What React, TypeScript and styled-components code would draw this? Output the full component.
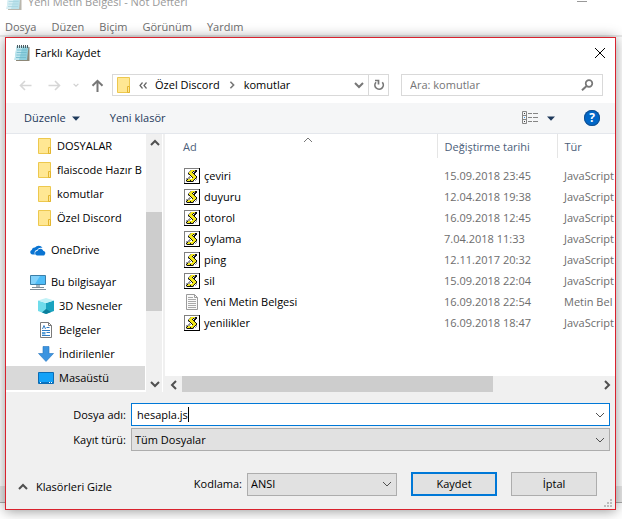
import React, { useState } from "react";
import styled, { createGlobalStyle, css } from "styled-components";

const GlobalStyle = createGlobalStyle`
  *, *::before, *::after { box-sizing: border-box; }
  body {
    margin: 0;
    background: #fff;
    color: #000;
    font: 11px/16px "Open Sans", "Noto Sans", sans-serif;
  }
  button, input, select { font: inherit; color: inherit; margin: 0; }
`;

const Desktop = styled.div`
  display: grid;
  min-height: 100vh;
  overflow: hidden;
`;

/* Notepad window in the background */

const Notepad = styled.div`
  grid-area: 1 / 1;
  min-width: 0;
  display: flex;
  flex-direction: column;
`;

const NotepadTitle = styled.div`
  height: 10px;
  padding: 0 35px 0 6px;
  display: flex;
  align-items: flex-end;
  gap: 6px;
  overflow: hidden;
  color: #999;
  white-space: nowrap;
  svg { flex: none; }
`;

const Minimise = styled.button`
  margin-left: auto;
  width: 10px;
  height: 9px;
  padding: 0;
  border: 0;
  border-top: 1px solid #999;
  background: none;
`;

const MenuBar = styled.nav`
  height: 27px;
  padding: 9px 0 0 5px;
  display: flex;
  align-items: flex-start;
  gap: 15px;
  border-bottom: 2px solid #e9e9e9;
`;

const MenuItem = styled.button`
  padding: 0;
  border: 0;
  background: none;
  color: #6d6d6d;
`;

const EditorArea = styled.div`
  flex: 1;
`;

const NotepadScroll = styled.div`
  height: 17px;
  margin-bottom: 16px;
  background: #e9e9e9;
  border-bottom: 1px solid #aaa;
`;

/* Save dialog */

const Dialog = styled.form`
  grid-area: 1 / 1;
  z-index: 1;
  min-width: 0;
  margin: 37px 6px 9px 5px;
  display: flex;
  flex-direction: column;
  border: 1px solid #d9232e;
  background: #fff;
  box-shadow: 0 1px 12px rgba(0, 0, 0, 0.42);
`;

const TitleBar = styled.header`
  height: 29px;
  padding: 0 10px 0 8px;
  display: flex;
  align-items: center;
  gap: 5px;
  h1 { margin: 0; font: inherit; }
`;

const IconButton = styled.button`
  flex: none;
  display: flex;
  align-items: center;
  justify-content: center;
  padding: 0;
  border: 0;
  background: none;
`;

const CloseButton = styled(IconButton)`
  margin-left: auto;
`;

const NavRow = styled.div`
  display: flex;
  align-items: center;
  padding: 7px 12px 7px 13px;
`;

const NavButtons = styled.div`
  flex: none;
  display: flex;
  align-items: center;
  gap: 12px;
  width: 93px;
`;

const ForwardButton = styled(IconButton)`
  margin-left: 4px;
`;

const AddressBar = styled.div`
  flex: 277 1 277px;
  min-width: 0;
  height: 22px;
  display: flex;
  align-items: center;
  border: 1px solid #d9d9d9;
  padding-left: 4px;
  white-space: nowrap;
`;

const Crumbs = styled.div`
  flex: 1;
  display: flex;
  align-items: center;
  gap: 8px;
  a { color: inherit; text-decoration: none; }
`;

const RefreshButton = styled(IconButton)`
  width: 20px;
  align-self: stretch;
  margin-left: 4px;
  border-left: 1px solid #d9d9d9;
`;

const SearchBox = styled.label`
  flex: 202 1 202px;
  min-width: 0;
  height: 22px;
  margin-left: 12px;
  padding: 0 8px;
  display: flex;
  align-items: center;
  border: 1px solid #d9d9d9;
  input {
    flex: 1;
    min-width: 0;
    padding: 0;
    border: 0;
    outline: 0;
    background: none;
  }
  input::placeholder { color: #757575; opacity: 1; }
`;

const Toolbar = styled.div`
  height: 31px;
  padding: 0 15px 0 18px;
  display: flex;
  align-items: center;
  background: #f5f6f7;
  border-bottom: 1px solid #e4e7ec;
  color: #1e395b;
`;

const ToolButton = styled(IconButton)`
  gap: 6px;
  margin-right: 30px;
`;

const ViewTools = styled.div`
  margin-left: auto;
  display: flex;
  align-items: center;
  gap: 9px;
`;

const HelpButton = styled(IconButton)`
  margin-left: 20px;
  width: 16px;
  height: 16px;
  border-radius: 50%;
  background: #0067c8;
  box-shadow: 0 0 0 1px #14508f inset;
  color: #fff;
  font-size: 12px;
  font-weight: 700;
`;

const Body = styled.div`
  flex: 1;
  min-height: 256px;
  display: flex;
`;

const Sidebar = styled.nav`
  width: 140px;
  flex: none;
  overflow: hidden;
`;

const TreeList = styled.ul`
  margin: 0;
  padding: 0;
  list-style: none;
  & + & { margin-top: 8px; }
`;

const TreeItem = styled.a<{ $depth: number; $selected?: boolean }>`
  height: 24px;
  padding-left: ${(p) => (p.$depth === 0 ? 24 : 32)}px;
  display: flex;
  align-items: center;
  gap: 5px;
  color: inherit;
  text-decoration: none;
  white-space: nowrap;
  width: 139px;
  overflow: hidden;
  background: ${(p) => (p.$selected ? "#d9d9d9" : "none")};
  svg { flex: none; }
`;

const scrollTrack = css`
  display: flex;
  background: #f0f0f0;
`;

const VerticalScroll = styled.div`
  ${scrollTrack}
  flex-direction: column;
  width: 16px;
  flex: none;
`;

const HorizontalScroll = styled.div`
  ${scrollTrack}
  height: 16px;
`;

const ScrollButton = styled(IconButton)`
  width: 17px;
  height: 17px;
`;

const Spacer = styled.div<{ $grow: number }>`
  flex: ${(p) => p.$grow} 1 0;
`;

const Thumb = styled.div<{ $grow: number }>`
  flex: ${(p) => p.$grow} 1 0;
  background: #cdcdcd;
`;

const FilePane = styled.section`
  flex: 1;
  min-width: 0;
  display: flex;
  flex-direction: column;
  border-left: 2px solid #f0f0f0;
  margin-left: 1px;
`;

const FileArea = styled.div`
  flex: 1;
  overflow: hidden;
`;

const FileTable = styled.table`
  width: 100%;
  table-layout: fixed;
  border-collapse: collapse;
  white-space: nowrap;
  th {
    height: 24px;
    padding: 2px 0 0 7px;
    font-weight: 400;
    text-align: left;
    color: #4c607a;
    border-right: 1px solid #e5e5e5;
  }
  th:first-child { padding-left: 18px; }
  th:last-child { border-right: 0; }
  td {
    height: 21px;
    padding: 0 0 0 7px;
    color: #6d6d6d;
  }
  tbody::before { content: ""; display: block; height: 7px; }
`;

const HeadCell = styled.div`
  display: grid;
  grid-template-columns: 1fr auto 1fr;
  padding-right: 4px;
  svg { grid-column: 2; margin-top: -4px; }
`;

const FileName = styled.div`
  display: flex;
  align-items: center;
  gap: 4px;
  padding-left: 12px;
  color: #000;
`;

const Footer = styled.footer`
  background: #f0f0f0;
  padding: 11px 5px 2px;
`;

const Field = styled.div`
  display: grid;
  grid-template-columns: 120px 1fr;
  align-items: center;
  margin-bottom: 2px;
  label { text-align: right; padding-right: 5px; }
`;

const InputFrame = styled.div`
  height: 23px;
  padding: 0 4px 0 5px;
  display: flex;
  align-items: center;
  border: 1px solid #0078d7;
  background: #fff;
  input {
    field-sizing: content;
    padding: 0;
    border: 0;
    outline: 0;
    background: none;
    height: 16px;
    caret-color: transparent;
  }
`;

const Caret = styled.span`
  width: 1px;
  height: 15px;
  background: #000;
`;

const SelectFrame = styled.div<{ $width?: string }>`
  width: ${(p) => p.$width ?? "auto"};
  height: 23px;
  display: grid;
  align-items: center;
  border: 1px solid #adadad;
  background: #e1e1e1;
  select, svg { grid-area: 1 / 1; }
  select {
    appearance: none;
    width: 100%;
    height: 21px;
    padding: 0 20px 0 3px;
    border: 0;
    border-radius: 0;
    background: none;
  }
  svg { justify-self: end; margin-right: 4px; pointer-events: none; }
`;

const Actions = styled.div`
  margin-top: 21px;
  padding-right: 13px;
  display: flex;
  align-items: center;
  gap: 14px;
  height: 24px;
`;

const HideFolders = styled(IconButton)`
  gap: 8px;
  margin: 6px auto 0 7px;
`;

const Encoding = styled.div`
  display: flex;
  align-items: center;
  gap: 5px;
`;

const ActionButton = styled.button<{ $primary?: boolean }>`
  width: 86px;
  height: 24px;
  padding: 0;
  border: ${(p) => (p.$primary ? "2px solid #0078d7" : "1px solid #adadad")};
  background: #e1e1e1;
`;

const Grip = styled.div`
  display: flex;
  justify-content: flex-end;
  margin: 3px -2px 0 0;
`;

/* Icons */

type ChevronDir = "up" | "down" | "left" | "right";
const chevrons: Record<ChevronDir, string> = {
  up: "M1 7 5 3l4 4",
  down: "M1 3l4 4 4-4",
  left: "M7 1 3 5l4 4",
  right: "M3 1l4 4-4 4",
};

const Chevron = ({ dir, color = "#505050", weight = 2, size = 10 }: { dir: ChevronDir; color?: string; weight?: number; size?: number }) => (
  <svg width={size} height={size} viewBox="0 0 10 10" fill="none" stroke={color} strokeWidth={weight} aria-hidden>
    <path d={chevrons[dir]} />
  </svg>
);

const DoubleChevron = () => (
  <svg width="8" height="8" viewBox="0 0 8 8" fill="none" stroke="#666" strokeWidth="1.200" aria-hidden>
    <path d="M3.500 1.500 1 4.500l2.500 3M7.500 1.500 5 4.500l2.500 3" />
  </svg>
);

const Arrow = ({ dir, color }: { dir: "left" | "right" | "up"; color: string }) => (
  <svg width="13" height="13" viewBox="0 0 13 13" fill="none" stroke={color} strokeWidth={dir === "up" ? 2 : 1.6} aria-hidden>
    {dir === "left" && <path d="M12.500 6.500H1.500M6 2 1.500 6.500 6 11" />}
    {dir === "right" && <path d="M.5 6.500h11M7 2l4.500 4.500L7 11" />}
    {dir === "up" && <path d="M6.500 13V2M1.500 6.800l5-5 5 5" />}
  </svg>
);

const Triangle = () => (
  <svg width="8" height="5" viewBox="0 0 8 5" aria-hidden>
    <path d="M0 .5h8L4 4.800z" fill="#1e395b" />
  </svg>
);

const NotepadIcon = ({ faded = false }: { faded?: boolean }) => (
  <svg width="16" height="16" viewBox="0 0 16 16" opacity={faded ? 0.6 : 1} aria-hidden>
    <path d="M3 2h12.500v14H2z" fill="#8d8878" />
    <path d="M2.500 1.500h12L13 15H.5z" fill="#8fd0de" />
    <path d="M2.500 1.500h6L5 15H.5z" fill="#bfe6ee" />
    <path d="M3 5h10M2.700 7.500h10M2.400 10h10M2 12.500h10" stroke="#6fb9cb" strokeWidth=".8" />
    <path d="M3.500 0v3M5.500 0v3M7.500 0v3M9.500 0v3M11.500 0v3M13.500 0v3" stroke="#4b5a60" />
  </svg>
);

const FolderIcon = () => (
  <svg width="14" height="16" viewBox="0 0 14 16" aria-hidden>
    <path d="M.5.5h12v15H.5z" fill="#ffe793" stroke="#edc84e" />
    <path d="M10.500 9.500h2v6h-2z" fill="#ffe793" stroke="#e3b52f" />
  </svg>
);

const CloudIcon = () => (
  <svg width="16" height="16" viewBox="0 0 16 16" fill="#0a74d2" aria-hidden>
    <path d="M5 12.500H2.500A2.400 2.400 0 0 1 1.700 7.900 3.200 3.200 0 0 1 5 5.600 4.500 4.500 0 0 1 12.500 6C9.500 5.200 7.700 6.600 7.200 8.100 5 8.200 3.900 10.500 5 12.500z" />
    <path d="M7.200 13.500a2.300 2.300 0 0 1 .3-4.600c.8-2.800 4.600-2.800 5.700-.2a2.500 2.500 0 0 1 .6 4.800z" />
  </svg>
);

const ComputerIcon = () => (
  <svg width="16" height="16" viewBox="0 0 16 16" aria-hidden>
    <path d="M.5 1.500h15v9H.5z" fill="#4fbdf8" stroke="#3c7fa8" />
    <path d="M1 2h9L5 10H1z" fill="#83d2fb" />
    <path d="M6 11h4v2H6z" fill="#a8b4bc" />
    <path d="M2 13.500h12M0 15.500h16" stroke="#7f8d98" />
  </svg>
);

const CubeIcon = () => (
  <svg width="16" height="16" viewBox="0 0 16 16" aria-hidden>
    <path d="M0 2.500 8 5v11l-8-3z" fill="#6fdceb" />
    <path d="M16 2.500 8 5v11l8-3z" fill="#1aa3bf" />
    <path d="M0 2.500 8 0l8 2.500L8 5z" fill="#c2f2f7" />
    <path d="M8 11 4 14.500 8 16l5-2z" fill="#0b7f9c" />
  </svg>
);

const DocumentIcon = () => (
  <svg width="16" height="16" viewBox="0 0 16 16" aria-hidden>
    <path d="M2.500.5h8l3 3v12h-11z" fill="#fff" stroke="#7a7a7a" />
    <path d="M10.500.5v3h3" fill="none" stroke="#7a7a7a" />
    <path d="M4.500 7 6 3.500 7.500 7M8.500 5.500h3M4 8.500h8M8.500 10.500H12M4 13.500h8" fill="none" stroke="#2f7cc4" />
    <path d="M4 10h3.500v2.500H4z" fill="#5aa0d8" />
  </svg>
);

const DownloadIcon = () => (
  <svg width="16" height="16" viewBox="0 0 16 16" aria-hidden>
    <path d="M5 .5h6v7h4.500L8 15.500.5 7.500H5z" fill="#3b94e0" stroke="#2473bd" strokeWidth=".6" />
  </svg>
);

const DesktopIcon = () => (
  <svg width="16" height="16" viewBox="0 0 16 16" aria-hidden>
    <path d="M.5 2.500h15v11H.5z" fill="#14a2f8" stroke="#0c6cb4" />
    <path d="M1 12h14v1H1z" fill="#0b71bf" />
    <path d="M2 12.500h1M11 12.500h1M13 12.500h1" stroke="#fff" />
  </svg>
);

const scrollPixels = [
  "......gyyyykk...",
  ".....gyyykgkk...",
  "....gyyyk.kk....",
  "....kyyyykk.....",
  "....gkyyyyk.....",
  "......kyyyyk....",
  ".....g.kyyyyk...",
  "....ggg.kyyyk...",
  "..gggg..yyykg...",
  "..gkyyyyyyk.g...",
  "..kyyykyyk.g....",
  "..gkkkkkkg......",
];
const pixelPath = (ch: string) =>
  scrollPixels
    .flatMap((row, y) => [...row].map((c, x) => (c === ch ? `M${x} ${y + 2}h1v1h-1z` : "")))
    .join("");
const scriptShapes = [
  { fill: "#9a9a9a", d: pixelPath("g") },
  { fill: "#f2e71c", d: pixelPath("y") },
  { fill: "#111", d: pixelPath("k") },
];

const ScriptIcon = () => (
  <svg width="16" height="16" viewBox="0 0 16 16" shapeRendering="crispEdges" aria-hidden>
    <path d="M0 0h16v16H0z" fill="#000" />
    <path d="M0 0h15v15H0z" fill="#808080" />
    <path d="M1 1h14v14H1z" fill="#fff" />
    {scriptShapes.map((s) => (
      <path key={s.fill} d={s.d} fill={s.fill} />
    ))}
  </svg>
);

const TextFileIcon = () => (
  <svg width="16" height="16" viewBox="0 0 16 16" aria-hidden>
    <path d="M2.500.5h8l3 3v12h-11z" fill="#fafafa" stroke="#9b9b9b" />
    <path d="M10.500.5v3h3" fill="none" stroke="#9b9b9b" />
    <path d="M4 3.500h5M4 5.500h8M4 7.500h8M4 9.500h8M4 11.500h8M4 13.500h8" stroke="#a9a9a9" />
  </svg>
);

const RefreshIcon = () => (
  <svg width="12" height="12" viewBox="0 0 12 12" fill="none" stroke="#777" strokeWidth="1.700" aria-hidden>
    <path d="M9.300 3.300A4.200 4.200 0 1 1 3 3.200" />
    <path d="M2 1.500h3.500v4" />
  </svg>
);

const SearchIcon = () => (
  <svg width="13" height="12" viewBox="0 0 13 12" fill="none" stroke="#777" strokeWidth="1.700" aria-hidden>
    <circle cx="8" cy="4.500" r="3.300" />
    <path d="M5.600 7 1 11.300" strokeWidth="2" />
  </svg>
);

const ViewIcon = () => (
  <svg width="16" height="14" viewBox="0 0 16 14" fill="none" stroke="#858585" aria-hidden>
    <path d="M.5.5h4v12h-4zM.5 4.500h4M.5 8.500h4M6 2.500h4M11 2.500h5M6 6.500h4M11 6.500h5M6 10.500h4M11 10.500h5" />
    <path d="M2 2.500h1M2 10.500h1" stroke="#444" />
    <path d="M2 6.500h1" stroke="#2b8fe0" />
  </svg>
);

const CloseIcon = () => (
  <svg width="10" height="10" viewBox="0 0 10 10" stroke="#000" aria-hidden>
    <path d="M0 0l10 10M10 0 0 10" />
  </svg>
);

const GripIcon = () => (
  <svg width="8" height="8" viewBox="0 0 8 8" fill="#bcbcbc" aria-hidden>
    <path d="M6 0h2v2H6zM3 3h2v2H3zM6 3h2v2H6zM0 6h2v2H0zM3 6h2v2H3zM6 6h2v2H6z" />
  </svg>
);

/* Data */

const menu = ["Dosya", "Düzen", "Biçim", "Görünüm", "Yardım"];

const tree = [
  [
    { label: "DOSYALAR", icon: <FolderIcon />, depth: 2 },
    { label: "flaiscode Hazır B", icon: <FolderIcon />, depth: 2 },
    { label: "komutlar", icon: <FolderIcon />, depth: 2 },
    { label: "Özel Discord", icon: <FolderIcon />, depth: 2 },
  ],
  [{ label: "OneDrive", icon: <CloudIcon />, depth: 0 }],
  [
    { label: "Bu bilgisayar", icon: <ComputerIcon />, depth: 0 },
    { label: "3D Nesneler", icon: <CubeIcon />, depth: 1 },
    { label: "Belgeler", icon: <DocumentIcon />, depth: 1 },
    { label: "İndirilenler", icon: <DownloadIcon />, depth: 1 },
    { label: "Masaüstü", icon: <DesktopIcon />, depth: 1, selected: true },
  ],
] as { label: string; icon: React.ReactNode; depth: number; selected?: boolean }[][];

const files = [
  { name: "çeviri", date: "15.09.2018 23:45", type: "JavaScript" },
  { name: "duyuru", date: "12.04.2018 19:38", type: "JavaScript" },
  { name: "otorol", date: "16.09.2018 12:45", type: "JavaScript" },
  { name: "oylama", date: "7.04.2018 11:33", type: "JavaScript" },
  { name: "ping", date: "12.11.2017 20:32", type: "JavaScript" },
  { name: "sil", date: "15.09.2018 22:04", type: "JavaScript" },
  { name: "Yeni Metin Belgesi", date: "16.09.2018 22:54", type: "Metin Bel" },
  { name: "yenilikler", date: "16.09.2018 18:47", type: "JavaScript" },
];

export default function App() {
  const [fileName, setFileName] = useState("hesapla.js");

  return (
    <Desktop>
      <GlobalStyle />
      <Notepad>
        <NotepadTitle>
          <NotepadIcon faded />
          <span>Yeni Metin Belgesi - Not Defteri</span>
          <Minimise aria-label="Simge durumuna küçült" />
        </NotepadTitle>
        <MenuBar>
          {menu.map((m) => (
            <MenuItem key={m} type="button">{m}</MenuItem>
          ))}
        </MenuBar>
        <EditorArea />
        <NotepadScroll />
      </Notepad>

      <Dialog onSubmit={(e) => e.preventDefault()}>
        <TitleBar>
          <NotepadIcon />
          <h1>Farklı Kaydet</h1>
          <CloseButton type="button" aria-label="Kapat"><CloseIcon /></CloseButton>
        </TitleBar>

        <NavRow>
          <NavButtons>
            <IconButton type="button" aria-label="Geri"><Arrow dir="left" color="#d6d6d6" /></IconButton>
            <ForwardButton type="button" aria-label="İleri"><Arrow dir="right" color="#d6d6d6" /></ForwardButton>
            <IconButton type="button" aria-label="Son konumlar"><Chevron dir="down" color="#d0d0d0" size={6} /></IconButton>
            <IconButton type="button" aria-label="Yukarı"><Arrow dir="up" color="#777" /></IconButton>
          </NavButtons>
          <AddressBar>
            <Crumbs>
              <FolderIcon />
              <DoubleChevron />
              <a href="#discord">Özel Discord</a>
              <Chevron dir="right" color="#777" size={8} />
              <a href="#komutlar">komutlar</a>
            </Crumbs>
            <IconButton type="button" aria-label="Önceki konumlar"><Chevron dir="down" color="#777" /></IconButton>
            <RefreshButton type="button" aria-label="Yenile"><RefreshIcon /></RefreshButton>
          </AddressBar>
          <SearchBox>
            <input type="text" placeholder="Ara: komutlar" aria-label="Ara: komutlar" />
            <SearchIcon />
          </SearchBox>
        </NavRow>

        <Toolbar>
          <ToolButton type="button">Düzenle <Triangle /></ToolButton>
          <ToolButton type="button">Yeni klasör</ToolButton>
          <ViewTools>
            <IconButton type="button" aria-label="Görünüm"><ViewIcon /></IconButton>
            <IconButton type="button" aria-label="Diğer seçenekler"><Triangle /></IconButton>
            <HelpButton type="button" aria-label="Yardım">?</HelpButton>
          </ViewTools>
        </Toolbar>

        <Body>
          <Sidebar>
            {tree.map((group, i) => (
              <TreeList key={i}>
                {group.map((t) => (
                  <li key={t.label}>
                    <TreeItem href="#" $depth={t.depth} $selected={t.selected}>
                      {t.icon}
                      {t.label}
                    </TreeItem>
                  </li>
                ))}
              </TreeList>
            ))}
          </Sidebar>
          <VerticalScroll>
            <ScrollButton type="button" aria-label="Yukarı kaydır"><Chevron dir="up" /></ScrollButton>
            <Spacer $grow={61} />
            <Thumb $grow={99} />
            <Spacer $grow={64} />
            <ScrollButton type="button" aria-label="Aşağı kaydır"><Chevron dir="down" /></ScrollButton>
          </VerticalScroll>
          <FilePane>
            <FileArea>
              <FileTable>
                <colgroup>
                  <col style={{ width: 272 }} />
                  <col style={{ width: 120 }} />
                  <col />
                </colgroup>
                <thead>
                  <tr>
                    <th><HeadCell><span>Ad</span><Chevron dir="up" color="#777" weight={1} /></HeadCell></th>
                    <th>Değiştirme tarihi</th>
                    <th>Tür</th>
                  </tr>
                </thead>
                <tbody>
                  {files.map((f) => (
                    <tr key={f.name}>
                      <td>
                        <FileName>
                          {f.type === "JavaScript" ? <ScriptIcon /> : <TextFileIcon />}
                          {f.name}
                        </FileName>
                      </td>
                      <td>{f.date}</td>
                      <td>{f.type}</td>
                    </tr>
                  ))}
                </tbody>
              </FileTable>
            </FileArea>
            <HorizontalScroll>
              <ScrollButton type="button" aria-label="Sola kaydır"><Chevron dir="left" /></ScrollButton>
              <Thumb $grow={310} />
              <Spacer $grow={105} />
              <ScrollButton type="button" aria-label="Sağa kaydır"><Chevron dir="right" /></ScrollButton>
            </HorizontalScroll>
          </FilePane>
        </Body>

        <Footer>
          <Field>
            <label htmlFor="file-name">Dosya adı:</label>
            <InputFrame>
              <input id="file-name" type="text" value={fileName} onChange={(e) => setFileName(e.target.value)} />
              <Caret />
              <Spacer $grow={1} />
              <Chevron dir="down" weight={1} />
            </InputFrame>
          </Field>
          <Field>
            <label htmlFor="file-type">Kayıt türü:</label>
            <SelectFrame>
              <select id="file-type"><option>Tüm Dosyalar</option></select>
              <Chevron dir="down" weight={1} />
            </SelectFrame>
          </Field>
          <Actions>
            <HideFolders type="button"><Chevron dir="up" />Klasörleri Gizle</HideFolders>
            <Encoding>
              <label htmlFor="encoding">Kodlama:</label>
              <SelectFrame $width="150px">
                <select id="encoding"><option>ANSI</option></select>
                <Chevron dir="down" weight={1} />
              </SelectFrame>
            </Encoding>
            <ActionButton type="submit" $primary>Kaydet</ActionButton>
            <ActionButton type="button">İptal</ActionButton>
          </Actions>
          <Grip><GripIcon /></Grip>
        </Footer>
      </Dialog>
    </Desktop>
  );
}
